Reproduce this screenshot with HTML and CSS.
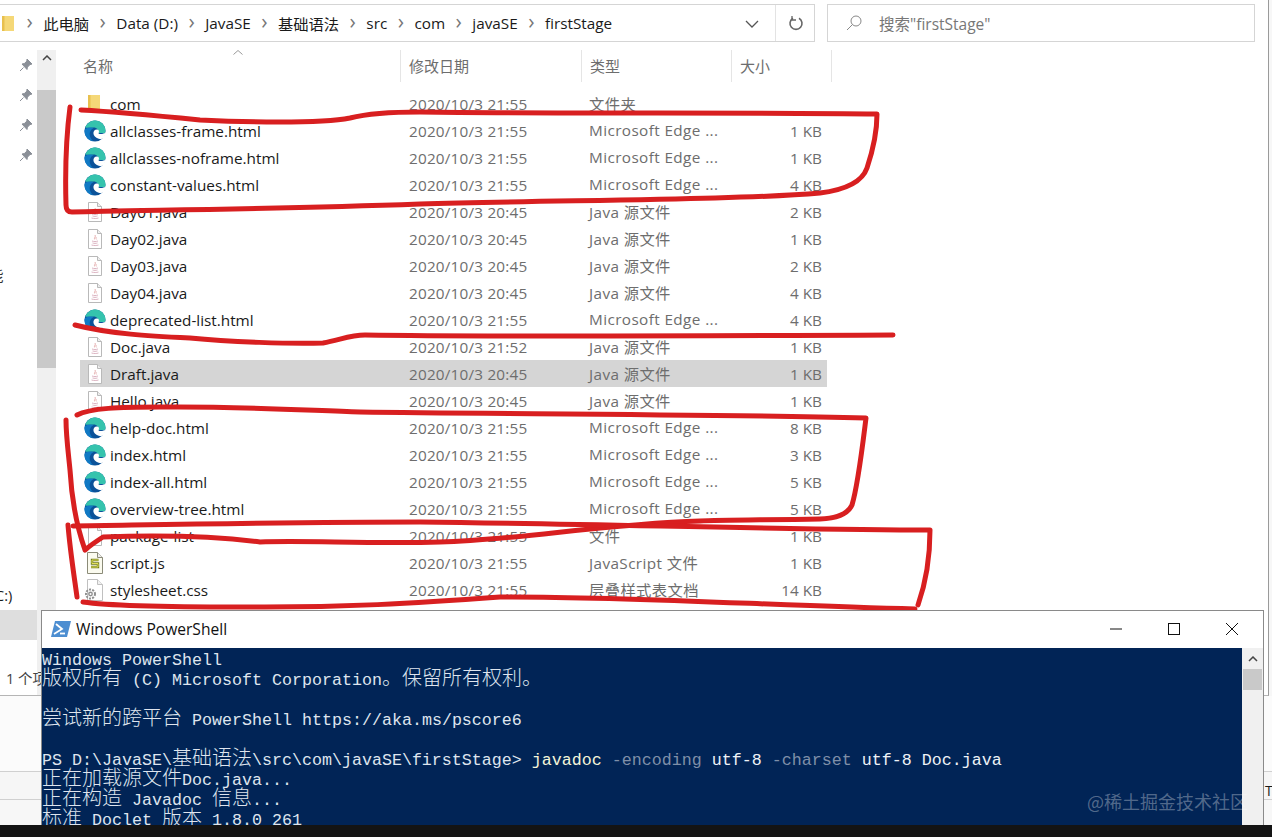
FILE: index.html
```html
<!DOCTYPE html>
<html lang="zh-CN">
<head>
<meta charset="utf-8">
<title>firstStage</title>
<link rel="stylesheet" href="styles.css">
</head>
<body>
<svg class="defs" width="0" height="0" aria-hidden="true">
  <symbol id="edge" viewBox="0 0 22 22">
    <circle cx="11" cy="11" r="10.500" fill="#0b5299"/>
    <path d="M1.200 7.500C3 3.200 6.800.5 11 .5c5.800 0 10.500 4.700 10.500 10 0 1-.2 1.800-.6 2.500H14.500c.5-3-1.500-5.500-5-5.500-3 0-6.300.8-8.300 0z" fill="#35c3ad"/>
    <path d="M.6 10c.6-1.600 2.600-2.500 5.400-2.500 1.500 0 2.800.3 3.500.8-2.500 1-4.500 4-3.500 8 .6 2 1.800 3.800 3.300 5C4.500 20.500.5 16.500.5 11.500z" fill="#1079c4"/>
    <path d="M13 9.500c-2.500 0-4 2-3.500 4.500 1 3.500 4.500 5 7.500 5 1 0 2-.2 2.500-.5 1-1.500 2-4 2-6-1.500 1.500-5.500 2-7 1 1-2 .5-4-1.500-4z" fill="#fff"/>
  </symbol>
  <symbol id="doc" viewBox="-3 -1 22 22">
    <path d="M1.500.5h9l4 4v15h-13z" fill="#fff" stroke="#b9b9b9"/>
    <path d="M10.500.5v4h4" fill="#eee" stroke="#b9b9b9"/>
  </symbol>
  <symbol id="java" viewBox="-3 -1 22 22">
    <path d="M1.500.5h9l4 4v15h-13z" fill="#fff" stroke="#b9b9b9"/>
    <path d="M10.500.5v4h4" fill="#eee" stroke="#b9b9b9"/>
    <path d="M8 6c1.300 1.800-1.300 2.600-.4 4.400M9.500 8c-.8.8-.6 1.500 0 2.400" fill="none" stroke="#e7b0b0"/>
    <path d="M5 12c2 .7 4 .7 6 0M5.500 14c1.500.5 3.500.5 5 0M4.500 16c2.500.7 5 .7 7 0" fill="none" stroke="#dcb4c2"/>
  </symbol>
  <symbol id="folder" viewBox="0 0 12 15">
    <path d="M0 0h12v15H0z" fill="#f5d878"/>
    <path d="M0 0h2.500v15H0z" fill="#e8c04e"/>
  </symbol>
  <symbol id="js" viewBox="-3 0 22 22">
    <path d="M.5.5h10l5 5v16H.500z" fill="#fbfbef" stroke="#8b8b78"/>
    <path d="M10.500.5v5h5" fill="#eee" stroke="#8b8b78"/>
    <path d="M11.500 8H5v3.500h6V15H4" fill="none" stroke="#6f7a1c" stroke-width="2.400"/>
    <path d="M11.500 8H5v3.500h6V15H4" fill="none" stroke="#e3e05a" stroke-width="1"/>
  </symbol>
  <symbol id="css" viewBox="-3 0 22 22">
    <path d="M.5.5h10l5 5v16H.500z" fill="#fff" stroke="#c0c0c0"/>
    <path d="M10.500.5v5h5" fill="#f1f1f1" stroke="#c0c0c0"/>
    <circle cx="3.500" cy="15" r="4.500" fill="none" stroke="#8f8f8f" stroke-width="2" stroke-dasharray="2 1.200"/>
    <circle cx="3.500" cy="15" r="2.400" fill="#8f8f8f"/>
    <circle cx="3.500" cy="15" r="1" fill="#fff"/>
  </symbol>
  <symbol id="pin" viewBox="0 0 14 14">
    <path d="M8 1l5 5-2 .6-2.600 2.600-.4 2.300L3 6l2.300-.4L7.900 3zM4.500 9.500L1 13" fill="#8a8f97" stroke="#8a8f97"/>
  </symbol>
</svg>

<div class="explorer">
  <div class="toolbar">
    <div class="address">
      <svg class="crumb-folder"><use href="#folder"/></svg>
      <span class="sep">›</span><span class="crumb">此电脑</span>
      <span class="sep">›</span><span class="crumb">Data (D:)</span>
      <span class="sep">›</span><span class="crumb">JavaSE</span>
      <span class="sep">›</span><span class="crumb">基础语法</span>
      <span class="sep">›</span><span class="crumb">src</span>
      <span class="sep">›</span><span class="crumb">com</span>
      <span class="sep">›</span><span class="crumb">javaSE</span>
      <span class="sep">›</span><span class="crumb">firstStage</span>
      <svg class="dropdown" viewBox="0 0 14 8"><path d="M1 1l6 6 6-6" fill="none" stroke="#555" stroke-width="1.300"/></svg>
      <div class="refresh">
        <svg viewBox="0 0 16 16" width="16" height="16"><path d="M5 3.200a6 6 0 1 0 6 0" fill="none" stroke="#666" stroke-width="1.600"/><path d="M4 1v4h4" fill="none" stroke="#666" stroke-width="1.300"/></svg>
      </div>
    </div>
    <div class="search">
      <svg viewBox="0 0 16 16" width="16" height="16"><circle cx="10" cy="6" r="5" fill="none" stroke="#888"/><path d="M6.500 9.500L1 15" stroke="#888"/></svg>
      <span>搜索"firstStage"</span>
    </div>
  </div>

  <div class="body">
    <div class="nav">
      <svg class="pin"><use href="#pin"/></svg>
      <svg class="pin"><use href="#pin"/></svg>
      <svg class="pin"><use href="#pin"/></svg>
      <svg class="pin"><use href="#pin"/></svg>
      <div class="nav-glyph">能</div>
      <div class="nav-drive">C:)</div>
      <div class="nav-selected"></div>
      <div class="status">1 个项目</div>
    </div>
    <div class="nav-scroll">
      <div class="scroll-up"><svg viewBox="0 0 10 6" width="10" height="6"><path d="M1 5l4-4 4 4" fill="none" stroke="#444" stroke-width="1.500"/></svg></div>
      <div class="scroll-thumb"></div>
    </div>
    <div class="files">
      <div class="sort-caret"><svg viewBox="0 0 10 5" width="10" height="5"><path d="M.5 4.500L5 .5l4.500 4" fill="none" stroke="#999"/></svg></div>
      <div class="head">
        <div class="hcell hname">名称</div>
        <div class="hcell hdate">修改日期</div>
        <div class="hcell htype">类型</div>
        <div class="hcell hsize">大小</div>
      </div>
      <div class="rows">
        <div class="row"><svg class="ico narrow"><use href="#folder"/></svg><span class="name">com</span><span class="date">2020/10/3 21:55</span><span class="type">文件夹</span><span class="size"></span></div>
        <div class="row"><svg class="ico"><use href="#edge"/></svg><span class="name">allclasses-frame.html</span><span class="date">2020/10/3 21:55</span><span class="type">Microsoft Edge ...</span><span class="size">1 KB</span></div>
        <div class="row"><svg class="ico"><use href="#edge"/></svg><span class="name">allclasses-noframe.html</span><span class="date">2020/10/3 21:55</span><span class="type">Microsoft Edge ...</span><span class="size">1 KB</span></div>
        <div class="row"><svg class="ico"><use href="#edge"/></svg><span class="name">constant-values.html</span><span class="date">2020/10/3 21:55</span><span class="type">Microsoft Edge ...</span><span class="size">4 KB</span></div>
        <div class="row"><svg class="ico"><use href="#java"/></svg><span class="name">Day01.java</span><span class="date">2020/10/3 20:45</span><span class="type">Java 源文件</span><span class="size">2 KB</span></div>
        <div class="row"><svg class="ico"><use href="#java"/></svg><span class="name">Day02.java</span><span class="date">2020/10/3 20:45</span><span class="type">Java 源文件</span><span class="size">1 KB</span></div>
        <div class="row"><svg class="ico"><use href="#java"/></svg><span class="name">Day03.java</span><span class="date">2020/10/3 20:45</span><span class="type">Java 源文件</span><span class="size">2 KB</span></div>
        <div class="row"><svg class="ico"><use href="#java"/></svg><span class="name">Day04.java</span><span class="date">2020/10/3 20:45</span><span class="type">Java 源文件</span><span class="size">4 KB</span></div>
        <div class="row"><svg class="ico"><use href="#edge"/></svg><span class="name">deprecated-list.html</span><span class="date">2020/10/3 21:55</span><span class="type">Microsoft Edge ...</span><span class="size">4 KB</span></div>
        <div class="row"><svg class="ico"><use href="#java"/></svg><span class="name">Doc.java</span><span class="date">2020/10/3 21:52</span><span class="type">Java 源文件</span><span class="size">1 KB</span></div>
        <div class="row selected"><svg class="ico"><use href="#java"/></svg><span class="name">Draft.java</span><span class="date">2020/10/3 20:45</span><span class="type">Java 源文件</span><span class="size">1 KB</span></div>
        <div class="row"><svg class="ico"><use href="#java"/></svg><span class="name">Hello.java</span><span class="date">2020/10/3 20:45</span><span class="type">Java 源文件</span><span class="size">1 KB</span></div>
        <div class="row"><svg class="ico"><use href="#edge"/></svg><span class="name">help-doc.html</span><span class="date">2020/10/3 21:55</span><span class="type">Microsoft Edge ...</span><span class="size">8 KB</span></div>
        <div class="row"><svg class="ico"><use href="#edge"/></svg><span class="name">index.html</span><span class="date">2020/10/3 21:55</span><span class="type">Microsoft Edge ...</span><span class="size">3 KB</span></div>
        <div class="row"><svg class="ico"><use href="#edge"/></svg><span class="name">index-all.html</span><span class="date">2020/10/3 21:55</span><span class="type">Microsoft Edge ...</span><span class="size">5 KB</span></div>
        <div class="row"><svg class="ico"><use href="#edge"/></svg><span class="name">overview-tree.html</span><span class="date">2020/10/3 21:55</span><span class="type">Microsoft Edge ...</span><span class="size">5 KB</span></div>
        <div class="row"><svg class="ico"><use href="#doc"/></svg><span class="name">package-list</span><span class="date">2020/10/3 21:55</span><span class="type">文件</span><span class="size">1 KB</span></div>
        <div class="row"><svg class="ico"><use href="#js"/></svg><span class="name">script.js</span><span class="date">2020/10/3 21:55</span><span class="type">JavaScript 文件</span><span class="size">1 KB</span></div>
        <div class="row"><svg class="ico"><use href="#css"/></svg><span class="name">stylesheet.css</span><span class="date">2020/10/3 21:55</span><span class="type">层叠样式表文档</span><span class="size">14 KB</span></div>
      </div>
    </div>
  </div>
</div>

<div class="under">
  <div class="under-a"></div>
  <div class="under-b"><span class="under-text">TF</span></div>
</div>

<svg class="ink" viewBox="0 0 1272 837" aria-hidden="true">
  <g fill="none" stroke="#d81f20" stroke-width="5" stroke-linecap="round" stroke-linejoin="round">
    <path d="M70 107C67 130 65 170 66 205Q66 212 72 212C130 210 250 210 420 204C560 200 740 200 820 193Q860 188 867 168C873 150 877 130 877 114C760 112 560 114 420 112C390 112 370 113 350 118C320 124 240 122 200 120C160 116 120 112 81 110"/>
    <path d="M75 325C110 334 150 336 190 338C230 342 290 344 323 343C340 340 350 335 365 335C500 337 700 336 893 335"/>
    <path d="M77 415C90 408 120 407 160 407C230 406 300 410 360 412C500 414 700 414 866 418C862 450 858 485 852 505Q846 518 820 519C760 520 720 520 700 521C600 524 520 540 440 542C370 544 300 540 260 542C220 537 160 535 103 537Q92 544 85 550C78 530 72 505 70 470C68 450 66 435 66 420"/>
    <path d="M68 525C70 550 74 575 77 597"/>
    <path d="M73 526C200 524 300 522 420 522C600 524 800 530 930 530C930 560 925 585 918 605"/>
    <path d="M83 602C110 606 160 607 240 607C340 608 420 603 500 597C620 596 780 606 915 609"/>
  </g>
</svg>

<div class="ps-window">
  <div class="ps-title">
    <svg class="ps-icon" viewBox="0 0 20 16"><path d="M4 0h16l-4 16H0z" fill="#4d8ed1"/><path d="M5 3l6 5-8 5" fill="none" stroke="#fff" stroke-width="1.800"/><path d="M9 12.500h5" stroke="#fff" stroke-width="1.800"/></svg>
    <span class="ps-name">Windows PowerShell</span>
    <div class="ps-buttons">
      <svg viewBox="0 0 14 14" width="14" height="14"><path d="M1 7h12" stroke="#111" stroke-width="1"/></svg>
      <svg viewBox="0 0 14 14" width="14" height="14"><rect x="1.500" y="1.500" width="11" height="11" fill="none" stroke="#111" stroke-width="1"/></svg>
      <svg viewBox="0 0 14 14" width="14" height="14"><path d="M1 1l12 12M13 1L1 13" stroke="#111" stroke-width="1"/></svg>
    </div>
  </div>
  <div class="ps-body">
    <div class="console">
      <div class="line">Windows PowerShell</div>
      <div class="line"><span class="cn">版权所有</span> (C) Microsoft Corporation<span class="cn">。保留所有权利。</span></div>
      <div class="line"></div>
      <div class="line"><span class="cn">尝试新的跨平台</span> PowerShell https://aka.ms/pscore6</div>
      <div class="line"></div>
      <div class="line">PS D:\JavaSE\<span class="cn">基础语法</span>\src\com\javaSE\firstStage&gt; <span class="cmd">javadoc</span> <span class="param">-encoding</span> <span class="arg">utf-8</span> <span class="param">-charset</span> <span class="arg">utf-8</span> <span class="arg">Doc.java</span></div>
      <div class="line"><span class="cn">正在加载源文件</span>Doc.java...</div>
      <div class="line"><span class="cn">正在构造</span> Javadoc <span class="cn">信息</span>...</div>
      <div class="line"><span class="cn">标准</span> Doclet <span class="cn">版本</span> 1.8.0 261</div>
    </div>
    <div class="ps-scroll">
      <div class="ps-up"><svg viewBox="0 0 10 6" width="10" height="6"><path d="M1 5l4-4 4 4" fill="none" stroke="#444" stroke-width="1.500"/></svg></div>
      <div class="ps-thumb"></div>
    </div>
  </div>
</div>

<div class="taskbar"></div>
<div class="watermark">@稀土掘金技术社区</div>
</body>
</html>
```
FILE: styles.css
```css
html, body {
  margin: 0;
  padding: 0;
}
body {
  position: relative;
  width: 1272px;
  height: 837px;
  overflow: hidden;
  background: #f7f7f7;
  font-family: "Open Sans", "Noto Sans CJK SC", sans-serif;
  color: #1a1a1a;
}
.defs {
  position: absolute;
}

/* explorer */
.explorer {
  width: 1268px;
  height: 695px;
  background: #fff;
  border-right: 1px solid #9a9a9a;
  border-bottom: 1px solid #b5b5b5;
  box-sizing: content-box;
  overflow: hidden;
}
.toolbar {
  display: flex;
  height: 38px;
  padding-top: 4px;
  gap: 12px;
}
.address {
  display: flex;
  align-items: center;
  width: 815px;
  height: 38px;
  box-sizing: border-box;
  border: 1px solid #d5d5d5;
  border-left: 0;
  font-size: 15.300px;
  position: relative;
}
.crumb-folder {
  width: 12px;
  height: 15px;
  flex: none;
  margin: 0 2px 0 2px;
}
.sep {
  color: #777;
  font-size: 21px;
  width: 27.200px;
  text-align: center;
  flex: none;
  line-height: 1;
  margin-top: -4px;
}
.crumb {
  flex: none;
  white-space: nowrap;
}
.dropdown {
  width: 14px;
  height: 8px;
  position: absolute;
  left: 745px;
  top: 15px;
}
.refresh {
  position: absolute;
  left: 775px;
  top: 0;
  bottom: 0;
  width: 39px;
  border-left: 1px solid #e3e3e3;
  display: flex;
  align-items: center;
  justify-content: center;
}
.search {
  width: 428px;
  height: 38px;
  box-sizing: border-box;
  border: 1px solid #d5d5d5;
  display: flex;
  align-items: center;
  gap: 17px;
  padding-left: 18px;
  color: #777;
  font-size: 15.500px;
}
.body {
  display: flex;
  height: 645px;
  margin-top: 8px;
}
.nav {
  width: 37px;
  flex: none;
  display: flex;
  flex-direction: column;
  align-items: flex-end;
  padding: 8px 4px 0 0;
  box-sizing: border-box;
  position: relative;
  font-size: 14.500px;
}
.pin {
  width: 14px;
  height: 14px;
  margin-bottom: 16px;
  flex: none;
}
.nav-glyph {
  align-self: flex-start;
  margin: 88px 0 0 -11px;
  height: 20px;
  line-height: 20px;
  color: #333;
}
.nav-drive {
  align-self: flex-start;
  margin: 300px 0 0 -5px;
  height: 20px;
  line-height: 20px;
}
.nav-selected {
  align-self: stretch;
  margin: 4px -4px 0 0;
  height: 30px;
  background: #dedede;
}
.status {
  align-self: flex-start;
  margin: 27px 0 0 6px;
  white-space: nowrap;
  font-size: 14.500px;
  color: #444;
}
.nav-scroll {
  width: 19px;
  flex: none;
  background: #f0f0f0;
}
.scroll-up {
  height: 40px;
  display: flex;
  align-items: flex-start;
  justify-content: center;
  padding-top: 5px;
  box-sizing: border-box;
}
.scroll-thumb {
  height: 278px;
  background: #c9c9c9;
}
.files {
  flex: 1;
  position: relative;
  padding-left: 24px;
}
.sort-caret {
  position: absolute;
  left: 177px;
  top: -1px;
  line-height: 0;
}
.head {
  display: flex;
  height: 32px;
  font-size: 15px;
  color: #6d6d6d;
}
.hcell {
  box-sizing: border-box;
  padding-left: 8px;
  line-height: 32px;
  border-right: 1px solid #e5e5e5;
}
.hname { width: 321px; padding-left: 3px; }
.hdate { width: 181px; }
.htype { width: 150px; }
.hsize { width: 100px; }
.rows {
  margin-top: 8px;
  width: 747px;
}
.row {
  display: flex;
  align-items: center;
  height: 27px;
  font-size: 15.300px;
  white-space: nowrap;
  padding-top: 1px;
  box-sizing: border-box;
}
.row.selected {
  background: #d5d5d5;
}
.ico {
  width: 22px;
  height: 22px;
  flex: none;
  margin: -1px 4px 0 4px;
}
.ico.narrow {
  width: 12px;
  height: 15px;
  margin: -4px 10px 0 8px;
}
.name {
  width: 299px;
  flex: none;
  color: #1a1a1a;
}
.date {
  width: 180px;
  flex: none;
  color: #6d6d6d;
  letter-spacing: 0.200px;
}
.type {
  width: 150px;
  flex: none;
  color: #6d6d6d;
  letter-spacing: 0.400px;
  margin-top: -2px;
}
.size {
  width: 83px;
  flex: none;
  text-align: right;
  color: #6d6d6d;
}

/* area below explorer */
.under-a {
  height: 75px;
  border-bottom: 1px solid #d0d0d0;
  background: #fbfbfb;
}
.under-b {
  height: 27px;
  border-bottom: 1px solid #d0d0d0;
  background: #f6f6f6;
  text-align: right;
  overflow: hidden;
}
.under-text {
  font-size: 14px;
  line-height: 38px;
  margin-right: -8px;
}

/* annotations */
.ink {
  position: absolute;
  left: 0;
  top: 0;
  width: 1272px;
  height: 837px;
  pointer-events: none;
}

/* powershell */
.ps-window {
  position: absolute;
  left: 41px;
  top: 610px;
  width: 1223px;
  height: 215px;
  box-sizing: border-box;
  border: 1px solid #8a8a8a;
  border-bottom: 0;
  background: #fff;
  display: flex;
  flex-direction: column;
}
.ps-title {
  display: flex;
  align-items: center;
  height: 37px;
  flex: none;
  padding: 0 0 2px 9px;
  box-sizing: border-box;
  font-size: 15.600px;
  position: relative;
}
.ps-icon {
  width: 20px;
  height: 16px;
  margin-right: 5px;
}
.ps-name {
  color: #111;
}
.ps-buttons {
  position: absolute;
  left: 1067px;
  top: 11px;
  display: flex;
  gap: 44px;
}
.ps-body {
  display: flex;
  flex: 1;
  min-height: 0;
}
.console {
  flex: 1;
  background: #012456;
  color: #dfe5ee;
  font-family: "Liberation Mono", "Noto Sans CJK SC", monospace;
  font-size: 16.670px;
  padding-top: 3px;
  overflow: hidden;
}
.line {
  height: 20px;
  line-height: 20px;
  white-space: pre;
}
.cn {
  font-family: "Noto Sans CJK SC", sans-serif;
  font-size: 20px;
  font-weight: 300;
  line-height: 0;
}
.cmd { color: #f5f5d8; }
.param { color: #7f8fa8; }
.arg { color: #eef2f6; }
.ps-scroll {
  width: 21px;
  flex: none;
  background: #f0f0f0;
}
.ps-up {
  height: 21px;
  display: flex;
  align-items: center;
  justify-content: center;
}
.ps-thumb {
  height: 21px;
  margin: 0 1px;
  background: #c9c9c9;
}

.taskbar {
  position: absolute;
  left: 0;
  right: 0;
  top: 825px;
  height: 12px;
  background: #141414;
}
.watermark {
  position: absolute;
  left: 1087px;
  top: 789px;
  font-family: "Noto Sans CJK SC", sans-serif;
  font-size: 18px;
  line-height: 24px;
  color: rgba(255, 255, 255, 0.32);
  white-space: nowrap;
}
```
